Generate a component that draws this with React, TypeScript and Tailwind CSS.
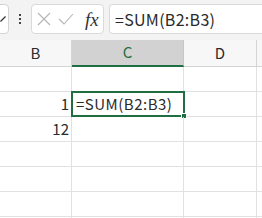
const cols = [
  { key: "B", w: "w-[72px]" },
  { key: "C", w: "w-[112px]" },
  { key: "D", w: "w-[73px]" },
  { key: "E", w: "w-[40px]" },
];

const rows: (string | null)[] = [null, "1", "12", null, null, null, null];

export default function App() {
  return (
    <div
      className="w-[262px] h-[218px] overflow-hidden bg-white text-[#2a2a2a]"
      style={{ fontFamily: '"Noto Sans CJK JP", "Noto Sans", sans-serif' }}
    >
      {/* formula bar */}
      <div className="h-[40px] bg-[#f3f3f3] flex items-start pt-[4px]">
        <div className="w-[20px] h-[30px] -ml-[11px] bg-white border border-[#d4d4d4] rounded-[4px] flex items-center justify-end pr-[2px]">
          <svg width="6" height="6" viewBox="0 0 6 6">
            <path d="M0.5 5.5 L5.5 0.5" stroke="#333" strokeWidth="1.2" />
          </svg>
        </div>
        <div className="w-[22px] h-[30px] flex flex-col items-center justify-center gap-[2px]">
          <span className="w-[2px] h-[2px] bg-[#444]" />
          <span className="w-[2px] h-[2px] bg-[#444]" />
          <span className="w-[2px] h-[2px] bg-[#444]" />
        </div>
        <div className="w-[73px] h-[30px] bg-white border border-[#dadada] rounded-[4px] flex items-center pl-[5px]">
          <svg width="14" height="14" viewBox="0 0 14 14">
            <path d="M1 1 L13 13 M13 1 L1 13" stroke="#b4b4b4" strokeWidth="1.1" fill="none" />
          </svg>
          <svg width="16" height="14" viewBox="0 0 16 14" className="ml-[7px]">
            <path d="M1 7 L6 12 L15 2" stroke="#b4b4b4" strokeWidth="1.1" fill="none" />
          </svg>
          <span
            className="ml-[11px] text-[19px] italic text-[#333] leading-none"
            style={{ fontFamily: '"Liberation Serif", serif' }}
          >
            fx
          </span>
        </div>
        <div className="ml-[5px] flex-1 h-[30px] bg-white border border-r-0 border-[#dadada] rounded-l-[4px] flex items-center pl-[5px] text-[16px] tracking-[0.3px] whitespace-nowrap">
          =SUM(B2:B3)
        </div>
      </div>

      {/* column headers */}
      <div className="flex h-[27px]">
        {cols.map((c) =>
          c.key === "C" ? (
            <div
              key={c.key}
              className={`${c.w} shrink-0 bg-[#d2d2d2] border-r border-[#c6c6c6] border-b-2 border-b-[#1e6e42] flex items-center justify-center text-[15px] text-[#1e6e42]`}
            >
              {c.key}
            </div>
          ) : (
            <div
              key={c.key}
              className={`${c.w} shrink-0 bg-[#f7f7f7] border-r border-[#d4d4d4] border-b border-b-[#d4d4d4] flex items-center justify-center text-[15px]`}
            >
              {c.key === "E" ? "" : c.key}
            </div>
          )
        )}
      </div>

      {/* grid */}
      {rows.map((v, i) => (
        <div key={i} className="flex h-[25px]">
          <div className="w-[72px] shrink-0 border-r border-b border-[#e1e1e1] flex items-center justify-end pr-[2px] text-[15px]">
            {v}
          </div>
          <div className="w-[112px] shrink-0 border-r border-b border-[#e1e1e1] relative">
            {i === 1 && (
              <div className="absolute -left-[1px] -top-[1px] w-[114px] h-[26px] border-2 border-[#1e6e42] flex items-center pl-[3px] text-[15px] tracking-[0.5px] whitespace-nowrap">
                =SUM(B2:B3)
                <span className="absolute -right-[4px] -bottom-[4px] w-[6px] h-[6px] bg-[#1e6e42] border border-white" />
              </div>
            )}
          </div>
          <div className="w-[73px] shrink-0 border-r border-b border-[#e1e1e1]" />
          <div className="w-[40px] shrink-0 border-b border-[#e1e1e1]" />
        </div>
      ))}
    </div>
  );
}
